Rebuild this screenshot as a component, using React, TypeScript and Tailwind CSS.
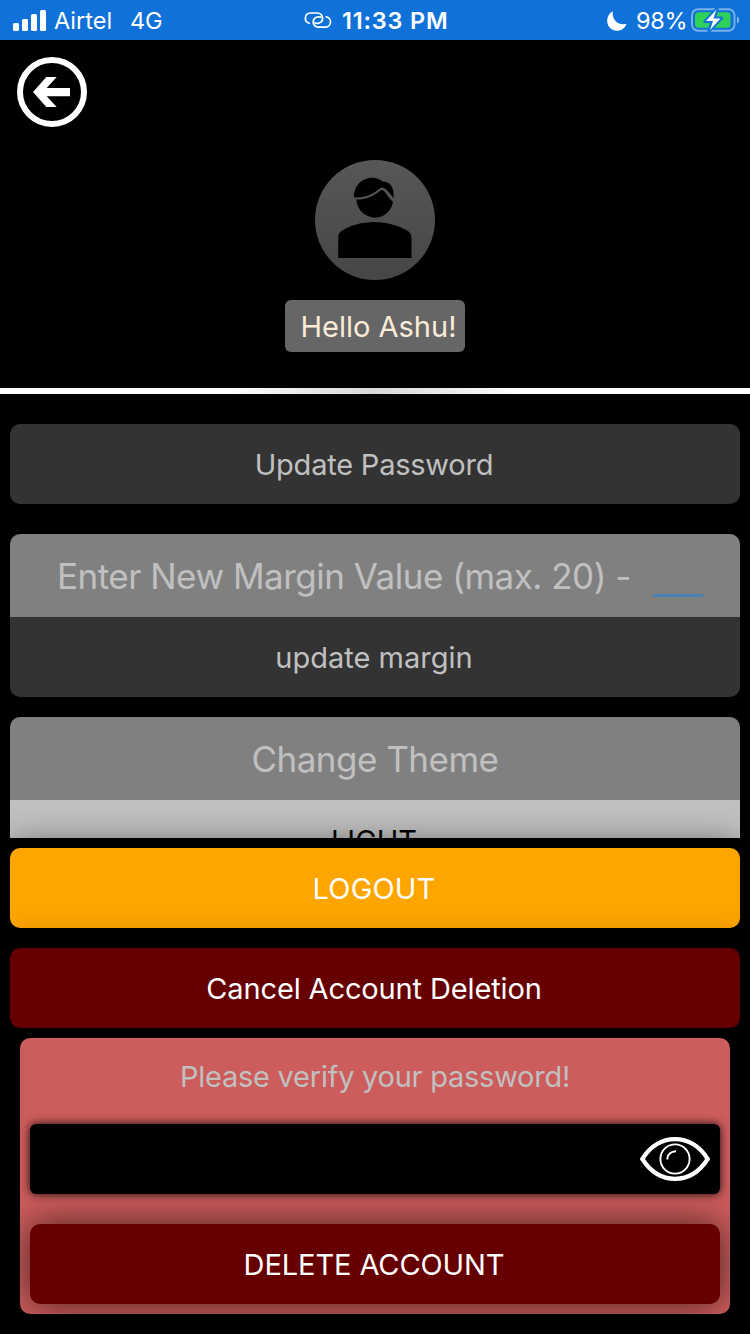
import type { ReactNode } from "react";

function SignalBars() {
  return (
    <svg className="h-[21px] w-[33px] shrink-0" viewBox="0 0 33 21" fill="white">
      <rect x="0" y="13" width="6" height="8" rx="1.5" />
      <rect x="9" y="9" width="6" height="12" rx="1.5" />
      <rect x="18" y="4" width="6" height="17" rx="1.5" />
      <rect x="27" y="0" width="6" height="21" rx="1.5" />
    </svg>
  );
}

function LinkIcon() {
  return (
    <svg className="h-[18px] w-[28px] shrink-0" viewBox="0 0 28 18" fill="none" stroke="white" strokeWidth="1.7" strokeLinecap="round">
      <path d="M5.200 12.200A5.200 5.200 0 0 1 6.200 2H13.500a5.150 5.150 0 0 1 0 10.300h-1.200a2.800 2.800 0 0 1-1.500-.5" />
      <path d="M22.300 5.800A5.200 5.200 0 0 1 21.600 16.100H14.300a5.150 5.150 0 0 1 0-10.300h1.200a2.800 2.800 0 0 1 1.500.5" />
    </svg>
  );
}

function Moon() {
  return (
    <svg className="mt-0.5 h-5 w-5 shrink-0" viewBox="0 0 20 20" fill="white">
      <path d="M5.800.2C4.700 8.200 10.400 15 19.600 12.800 18 17.200 14.200 19.800 10 19.800 4.600 19.800.2 15.500.2 10.100.2 5.700 2.300 1.900 5.800.2Z" />
    </svg>
  );
}

function Battery() {
  return (
    <svg className="h-[24px] w-[48px] shrink-0" viewBox="0 0 48 24">
      <rect x="1" y="1.200" width="42.500" height="21.600" rx="6" fill="none" stroke="white" strokeOpacity=".45" strokeWidth="1.900" />
      <path d="M46 8.500v7c1.300-.5 2-1.900 2-3.500s-.7-3-2-3.500Z" fill="white" fillOpacity=".5" />
      <rect x="4" y="4.200" width="35.500" height="15.600" rx="3.500" fill="#2fd158" />
      <path d="M26 .8 14 13.500h7L18 23 30.500 10.200h-7.200Z" fill="white" stroke="#1072d9" strokeWidth="3.200" strokeLinejoin="round" />
      <path d="M25.500 1.500 15 13h7L19 22 29.500 10.600h-7Z" fill="white" />
    </svg>
  );
}

function BackIcon() {
  return (
    <svg className="size-[70px]" viewBox="0 0 70 70">
      <circle cx="35" cy="35" r="32" fill="none" stroke="white" strokeWidth="6" />
      <path d="M16 35 29.300 20h10.400l-10 11H53v8.300H29.700l10 10.700H29.300Z" fill="white" />
    </svg>
  );
}

function Avatar() {
  return (
    <svg className="size-[120px]" viewBox="0 0 120 120">
      <defs>
        <linearGradient id="avatar" x1="0" y1="0" x2="0" y2="1">
          <stop offset="0" stopColor="#575757" />
          <stop offset="1" stopColor="#464646" />
        </linearGradient>
      </defs>
      <circle cx="60" cy="60" r="60" fill="url(#avatar)" />
      <path d="M39 37.500C38.500 26 47 17.700 57.300 17.700c4 0 7.500 1.500 10.500 3.800 7.500.3 11.800 6 10.700 16.500-2.500-2.500-7-10-11.200-10.400C62.500 28.500 57 38.500 39 37.500Z" />
      <path d="M41.300 39.600C57 39.800 63 31 67.200 30c3.600 1.500 7 9 10.700 11.600C76.800 51 69 57.700 60 57.700S42 50.500 41.300 39.600Z" />
      <path d="M23.200 98V79c0-4.500 1-6.500 4-8.500C35 65.500 47 62 59.500 62s25.500 4 33.500 9c2.500 1.800 3.500 4 3.500 8v19Z" />
    </svg>
  );
}

function EyeIcon() {
  return (
    <svg className="h-[44px] w-[70px]" viewBox="0 0 70 44" fill="none" stroke="white">
      <path d="M2.300 22C10 10 21 2.200 35 2.200S60 10 67.700 22C60 34 49 41.800 35 41.800S10 34 2.300 22Z" strokeWidth="4.200" />
      <circle cx="35" cy="22" r="14.600" strokeWidth="1.900" />
      <path d="M27.400 22.500c-.3-5 3.600-8.300 8.600-8.300" strokeWidth="1.900" />
    </svg>
  );
}

function Button({ className, children }: { className: string; children: ReactNode }) {
  return (
    <button type="button" className={`flex h-20 w-full shrink-0 items-center justify-center pt-px pr-0.5 text-[29px] leading-9 ${className}`}>
      {children}
    </button>
  );
}

export default function App() {
  return (
    <div className="flex h-[1334px] w-[750px] flex-col overflow-hidden bg-black font-['Inter','Liberation_Sans',sans-serif]">
      <div className="flex h-10 shrink-0 bg-[#1072d9] text-[23.5px] leading-10 text-white">
        <div className="flex w-[304px] items-center pl-[13px]">
          <SignalBars />
          <span className="mt-0.5 ml-[8px]">Airtel</span>
          <span className="mt-0.5 ml-[18px] tracking-[-0.3px]">4G</span>
        </div>
        <div className="flex w-[303px] items-center">
          <LinkIcon />
          <span className="mt-0.5 ml-[10px] font-semibold tracking-[0.8px]">11:33 PM</span>
        </div>
        <div className="flex items-center">
          <Moon />
          <span className="mt-0.5 ml-[9px] w-[55px] whitespace-nowrap tracking-[-0.3px]">98%</span>
          <Battery />
        </div>
      </div>

      <header className="flex h-[348px] shrink-0 flex-col items-center">
        <button type="button" className="mt-[17px] ml-[17px] self-start">
          <BackIcon />
        </button>
        <div className="mt-[33px]">
          <Avatar />
        </div>
        <div className="mt-5 flex h-[52px] w-[180px] items-center justify-center rounded-md bg-[#666] pt-0.5 pl-[7px] text-[29px] whitespace-nowrap text-[#faebd7]">
          Hello Ashu!
        </div>
      </header>
      <div className="h-1.5 shrink-0 bg-[linear-gradient(to_right,white_30%,#d9d9d9_50%,white_70%)]" />

      <main className="flex h-[444px] shrink-0 flex-col overflow-hidden px-2.5 pt-[30px]">
        <Button className="rounded-[10px] bg-[#333] tracking-[-0.22px] text-[#c0c0c0]">Update Password</Button>
        <section className="mt-[30px] shrink-0 overflow-hidden rounded-[10px]">
          <div className="flex h-[83px] items-center bg-[#808080] pl-[47px] text-[35px] whitespace-nowrap text-[#c0c0c0]">
            <span className="w-[596px] pt-0.5 tracking-[-0.5px]">Enter New Margin Value (max. 20) -</span>
            <div className="mt-[39px] h-[3px] w-[50px] bg-[#4682b4]" />
          </div>
          <Button className="bg-[#333] text-[#c0c0c0]">update margin</Button>
        </section>
        <section className="mt-5 shrink-0 overflow-hidden rounded-[10px]">
          <div className="flex h-[83px] items-center justify-center bg-[#808080] pt-0.5 text-[35px] tracking-[-0.5px] text-[#c0c0c0]">
            Change Theme
          </div>
          <Button className="bg-[#c0c0c0] text-black">LIGHT</Button>
        </section>
      </main>

      <footer className="flex grow flex-col bg-black px-2.5 pt-2.5">
        <Button className="rounded-[10px] bg-[#ffa500] tracking-[0.15px] text-white shadow-[0_0_36px_rgba(0,0,0,0.66)]">LOGOUT</Button>
        <Button className="mt-5 rounded-[10px] bg-[#660000] tracking-[-0.13px] text-white shadow-[0_0_36px_rgba(0,0,0,0.5)]">
          Cancel Account Deletion
        </Button>
        <section className="mx-2.5 mt-2.5 flex h-[276px] flex-col overflow-hidden rounded-[10px] bg-[#cd5c5c] px-2.5">
          <p className="h-[86px] pt-5 text-center text-[29px] leading-[38px] tracking-[-0.25px] text-[#c0c0c0]">
            Please verify your password!
          </p>
          <div className="flex h-[70px] items-center justify-end rounded-md bg-black pr-2.5 shadow-[0_0_10px_rgba(0,0,0,0.9)]">
            <EyeIcon />
          </div>
          <Button className="mt-[30px] rounded-[10px] bg-[#660000] tracking-[-0.1px] text-white shadow-[0_0_36px_rgba(0,0,0,0.66)]">
            DELETE ACCOUNT
          </Button>
        </section>
      </footer>
    </div>
  );
}
